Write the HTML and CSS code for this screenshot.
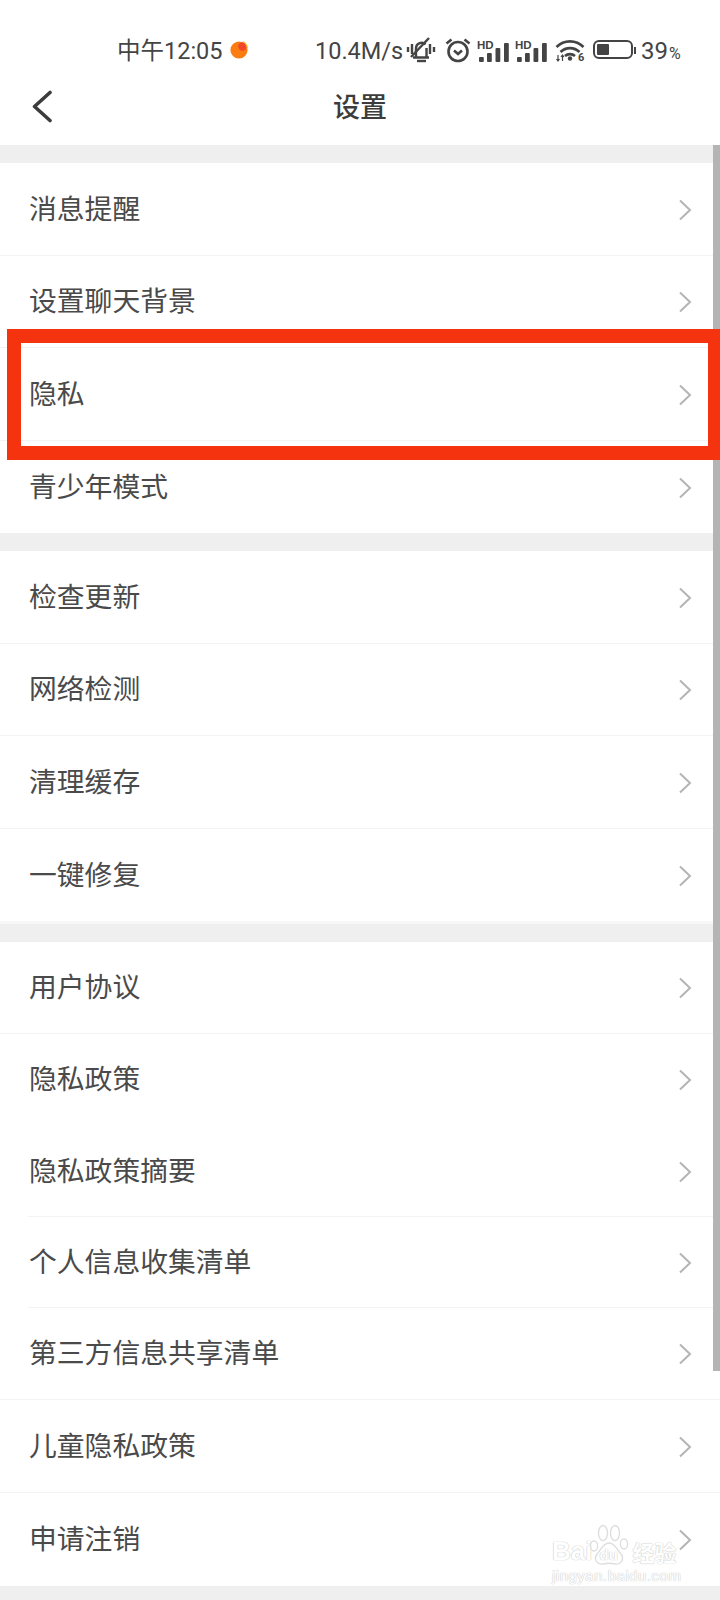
FILE: index.html
```html
<!DOCTYPE html>
<html lang="zh-CN">
<head>
    <meta charset="UTF-8">
    <meta name="viewport" content="width=device-width, initial-scale=1.0">
    <title>设置</title>
    <link rel="stylesheet" href="styles.css">
</head>
<body>
    <svg class="icon-defs" width="0" height="0">
        <symbol id="chev" viewBox="0 0 14 22"><path d="M2 1.5 L12 11 L2 20.5" fill="none" stroke="#b4b4b4" stroke-width="2"/></symbol>
        <symbol id="bars" viewBox="0 0 32 19"><rect x="2" y="14" width="4.8" height="5" rx="1"/><rect x="10" y="10" width="4.8" height="9" rx="1"/><rect x="18.500" y="5" width="4.8" height="14" rx="1"/><rect x="27" y="0" width="4.8" height="19" rx="1"/></symbol>
    </svg>
    <div class="status-bar">
        <span class="time">中午12:05</span>
        <svg class="app-dot" width="20" height="20" viewBox="0 0 20 20">
            <circle cx="10" cy="10" r="8.6" fill="#fb7d12"/>
            <circle cx="13.500" cy="6.500" r="4.2" fill="#f2452c"/>
            <path d="M14 1.500 A9 9 0 0 1 18.500 8" fill="none" stroke="#fbc531" stroke-width="1.4"/>
        </svg>
        <span class="speed">10.4M/s</span>
        <svg class="bell" width="30" height="26" viewBox="0 0 30 26" fill="none" stroke="#444" stroke-width="2.4">
            <path d="M7 20.500 H23 M10 20 V11 A5.500 5.500 0 0 1 19.500 7.500 M20.500 11 V20"/>
            <path d="M5 20 L23 1"/>
            <path d="M11 24 H20"/>
            <path d="M2 10 V15 M6 7 V17 M24 7 V17 M28 10 V15"/>
        </svg>
        <svg class="alarm" width="28" height="26" viewBox="0 0 28 26" fill="none" stroke="#444" stroke-width="2.6">
            <circle cx="14" cy="14.500" r="9.500"/>
            <path d="M10 13.500 L14 17 L18 13.500"/>
            <path d="M2.500 6.500 L7.500 2.500 M25.500 6.500 L20.500 2.500"/>
        </svg>
        <span class="signal">
            <span class="hd">HD</span>
            <svg width="32" height="19" fill="#444"><use href="#bars"/></svg>
        </span>
        <span class="signal signal-two">
            <span class="hd">HD</span>
            <svg width="32" height="19" fill="#444"><use href="#bars"/></svg>
        </span>
        <span class="wifi">
            <svg width="30" height="24" viewBox="0 0 30 24" fill="none" stroke="#444" stroke-width="2.6">
                <path d="M1.500 9 A19 19 0 0 1 28.500 9"/>
                <path d="M5.500 14 A13.500 13.500 0 0 1 24.500 14"/>
                <path d="M10 18 A7.500 7.500 0 0 1 20 18"/>
                <circle cx="15" cy="20.500" r="2.2" fill="#444" stroke="none"/>
                <path d="M3 17 V23 M1.500 21 L3 23 L4.500 21 M7.500 23 V17 M6 19 L7.500 17 L9 19" stroke-width="1.2"/>
            </svg>
            <span class="wifi-six">6</span>
        </span>
        <span class="battery"><span class="battery-fill"></span></span>
        <span class="battery-tip"></span>
        <span class="pct">39<small>%</small></span>
    </div>

    <div class="nav-bar">
        <svg class="back" width="24" height="34" viewBox="0 0 24 34"><path d="M19 2.500 L3.500 16.500 L19 30.500" fill="none" stroke="#3c3c3c" stroke-width="3.6" stroke-linecap="round" stroke-linejoin="round"/></svg>
        <span class="nav-title">设置</span>
    </div>

    <div class="gap"></div>
    <div class="group">
        <div class="row">消息提醒<svg class="chev"><use href="#chev"/></svg></div>
        <div class="row">设置聊天背景<svg class="chev"><use href="#chev"/></svg></div>
        <div class="row">隐私<svg class="chev"><use href="#chev"/></svg></div>
        <div class="row">青少年模式<svg class="chev"><use href="#chev"/></svg></div>
    </div>
    <div class="gap"></div>
    <div class="group">
        <div class="row">检查更新<svg class="chev"><use href="#chev"/></svg></div>
        <div class="row">网络检测<svg class="chev"><use href="#chev"/></svg></div>
        <div class="row">清理缓存<svg class="chev"><use href="#chev"/></svg></div>
        <div class="row">一键修复<svg class="chev"><use href="#chev"/></svg></div>
    </div>
    <div class="gap gap-wide"></div>
    <div class="group">
        <div class="row row-short">用户协议<svg class="chev"><use href="#chev"/></svg></div>
        <div class="row row-short no-line">隐私政策<svg class="chev"><use href="#chev"/></svg></div>
        <div class="row row-short inset">隐私政策摘要<svg class="chev"><use href="#chev"/></svg></div>
        <div class="row row-short inset">个人信息收集清单<svg class="chev"><use href="#chev"/></svg></div>
        <div class="row row-short">第三方信息共享清单<svg class="chev"><use href="#chev"/></svg></div>
        <div class="row row-tall">儿童隐私政策<svg class="chev"><use href="#chev"/></svg></div>
        <div class="row row-tall">申请注销<svg class="chev"><use href="#chev"/></svg></div>
    </div>
    <div class="gap"></div>

    <!-- overlays on the screenshot -->
    <div class="scrollbar"></div>
    <div class="red-box"></div>
    <div class="watermark">
        <div class="wm-top">
            <span>Bai</span>
            <svg width="40" height="42" viewBox="0 0 40 42" fill="none" stroke="#dedede" stroke-width="1.4">
                <ellipse cx="5" cy="22" rx="3.600" ry="5"/>
                <ellipse cx="14" cy="9" rx="4.500" ry="7.500"/>
                <ellipse cx="26" cy="9" rx="4.500" ry="7.500"/>
                <ellipse cx="35" cy="20" rx="3.600" ry="5"/>
                <path d="M20 19 C14 19 12 26 8 30 C4 36 9 41 14 40 C18 39 22 39 26 40 C31 41 36 36 32 30 C28 26 26 19 20 19 Z"/>
            </svg>
            <span class="wm-du">du</span>
            <span class="wm-cn">经验</span>
        </div>
        <div class="wm-url">jingyan.baidu.com</div>
    </div>
</body>
</html>
```

FILE: styles.css
```css
body {
    font-family: "Noto Sans CJK SC", "Noto Sans", sans-serif;
    background-color: #fff;
    color: #444;
    margin: 0;
    padding: 0;
    width: 720px;
    height: 1600px;
    overflow: hidden;
    position: relative;
}
.icon-defs {
    position: absolute;
}
.status-bar {
    height: 76px;
    padding: 36px 0 0 117px;
    box-sizing: border-box;
    display: flex;
    align-items: flex-start;
    color: #444;
}
.time,
.speed,
.pct {
    font-family: Roboto, "Noto Sans CJK SC", sans-serif;
    line-height: 30px;
    white-space: nowrap;
}
.time {
    width: 108px;
    font-size: 23.5px;
}
.app-dot {
    margin: 4px 0 0 4px;
}
.speed {
    width: 91px;
    margin-left: 66px;
    font-size: 23.5px;
}
.bell {
    margin: 1px 0 0 0;
}
.alarm {
    margin: 1px 0 0 8px;
}
.signal {
    width: 32px;
    height: 22px;
    margin: 4px 0 0 5px;
    position: relative;
    display: block;
}
.signal-two {
    margin-left: 6px;
}
.signal svg {
    position: absolute;
    left: 0;
    bottom: 0;
}
.hd {
    position: absolute;
    left: 0;
    top: 0;
    font-family: "Liberation Sans", sans-serif;
    font-size: 11.5px;
    line-height: 10px;
    font-weight: 700;
}
.wifi {
    width: 30px;
    height: 24px;
    margin: 2px 0 0 8px;
    position: relative;
    display: block;
}
.wifi-six {
    position: absolute;
    left: 23px;
    top: 14px;
    font-family: Roboto, sans-serif;
    font-size: 11px;
    line-height: 12px;
    font-weight: 700;
}
.battery {
    width: 32px;
    height: 11px;
    margin: 4px 0 0 8px;
    border: 2px solid #444;
    border-radius: 6px;
    padding: 2px 2px;
    display: flex;
}
.battery-fill {
    width: 12px;
    background-color: #444;
    border-radius: 1px;
}
.battery-tip {
    width: 2px;
    height: 7px;
    margin: 11px 0 0 1px;
    background-color: #444;
}
.pct {
    margin-left: 5px;
    font-size: 24px;
}
.pct small {
    font-size: 16px;
    margin-left: 1px;
}
.nav-bar {
    height: 69px;
    display: flex;
    align-items: center;
    justify-content: center;
    position: relative;
}
.back {
    position: absolute;
    left: 31px;
    top: 14px;
}
.nav-title {
    font-size: 27px;
    font-weight: 500;
    color: #3c3c3c;
    margin-bottom: 11px;
}
.gap {
    height: 18px;
    background-color: #efefef;
}
.gap-wide {
    height: 18px;
    border-top: 3px solid #f7f7f7;
}
.row {
    height: 92.5px;
    box-sizing: border-box;
    display: flex;
    align-items: center;
    justify-content: space-between;
    padding: 0 28px 4px 29px;
    font-size: 27.8px;
    color: #4a4a4a;
    border-bottom: 1px solid #f3f3f3;
}
.row:last-child {
    border-bottom: none;
}
.row-short {
    height: 91.5px;
}
.row-tall {
    height: 93px;
}
.no-line {
    border-bottom: none;
}
.inset {
    border-bottom: none;
    background: linear-gradient(#f3f3f3, #f3f3f3) no-repeat 28px 100% / 100% 1px;
}
.chev {
    width: 14px;
    height: 22px;
    margin-top: 6px;
}
.scrollbar {
    position: absolute;
    left: 713px;
    top: 145px;
    width: 7px;
    height: 1226px;
    background-color: #b4b4b4;
}
.red-box {
    position: absolute;
    left: 7px;
    top: 329px;
    right: 0;
    height: 131px;
    box-sizing: border-box;
    border: 14px solid #f5340f;
    border-right-width: 12px;
}
.watermark {
    position: absolute;
    left: 552px;
    top: 1522px;
    width: 170px;
    color: #fff;
    text-shadow: 0 0 1px #c4c4c4, 0 0 1px #c4c4c4;
}
.wm-top {
    display: flex;
    align-items: flex-end;
    height: 44px;
    font-family: "Liberation Sans", sans-serif;
    font-size: 26px;
    line-height: 30px;
    font-weight: 700;
}
.wm-top svg {
    margin-left: -3px;
}
.wm-du {
    font-size: 15px;
    line-height: 22px;
    margin-left: -30px;
    width: 30px;
}
.wm-cn {
    font-family: "Noto Sans CJK SC", sans-serif;
    font-size: 22px;
    line-height: 30px;
    margin-left: 3px;
    white-space: nowrap;
}
.wm-url {
    font-family: "Liberation Sans", sans-serif;
    font-size: 15px;
    line-height: 18px;
    letter-spacing: 0.5px;
    white-space: nowrap;
    margin-top: 1px;
}
```
